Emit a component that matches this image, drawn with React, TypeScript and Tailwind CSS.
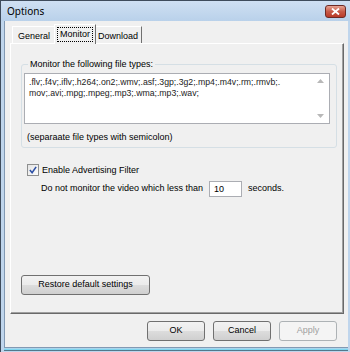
import React from 'react'

const btn =
  'h-[20px] rounded-[3px] border border-[#707070] bg-[linear-gradient(#f2f2f2_0%,#ebebeb_49%,#dddddd_50%,#cfcfcf_100%)] flex items-center justify-center text-black'

function TitleBar() {
  return (
    <div className="h-[20px] flex items-center justify-between pl-[6px] pr-[4px] bg-[linear-gradient(#cfe0f3,#b9d1ea)]">
      <span className="text-[10px] text-black font-['Noto_Sans','Liberation_Sans',sans-serif] leading-none">Options</span>
      <div className="w-[21px] h-[13px] mt-[1px] rounded-[3px] border border-[#6d2a25] bg-[linear-gradient(#e8a494,#c75a48_50%,#b93a28)] flex items-center justify-center">
        <svg width="9" height="7" viewBox="0 0 9 7">
          <path d="M1 0.5 L8 6.5 M8 0.5 L1 6.5" stroke="#fff" strokeWidth="1.8" />
        </svg>
      </div>
    </div>
  )
}

function Tab({ label, selected, pad }: { label: string; selected?: boolean; pad?: string }) {
  if (selected) {
    return (
      <div className="relative z-10 -mx-[2px] mb-[-1px] h-[20px] px-[2px] pt-[2px] bg-[#f0f0f0] border-t border-l border-white border-r border-r-[#707070] flex items-start">
        <span className="border border-dotted border-black px-[2px] leading-[13px]">{label}</span>
      </div>
    )
  }
  return (
    <div className={`h-[17px] ${pad} pt-[3px] bg-[#f0f0f0] border-t border-l border-white border-r border-r-[#707070] leading-[12px]`}>
      {label}
    </div>
  )
}

export default function App() {
  return (
    <div className="relative w-[350px] h-[352px] overflow-hidden bg-[#bfd5ec] border-t border-l border-[#3f4c5c] font-['Liberation_Sans',sans-serif] text-[9px] text-black">
      <TitleBar />
      <div className="ml-[3px] mr-[2px] h-[326px] bg-[#f0f0f0] border-l border-[#8299b3] flex flex-col">
        {/* tabs */}
        <div className="flex items-end h-[22px] pl-[7px] pt-[2px]">
          <Tab label="General" pad="px-[5px]" />
          <Tab label="Monitor" selected />
          <Tab label="Download" pad="px-[3px]" />
        </div>

        {/* panel */}
        <div className="ml-[5px] mr-[4px] h-[271px] border-t border-l border-white border-r border-b border-r-[#696969] border-b-[#696969] shadow-[inset_-1px_-1px_0_#a0a0a0] flex flex-col pl-[10px] pr-[6px]">
          <fieldset className="mt-[14px] border border-[#d5dfe5] rounded-[3px] pl-[2px] pr-[6px] pt-[3px] pb-[4px]">
            <legend className="ml-[4px] px-[2px] leading-[12px]">Monitor the following file types:</legend>
            <div className="h-[51px] bg-white border border-[#abadb3] flex">
              <div className="flex-1 pl-[4px] pr-[2px] pt-[3px] leading-[11px] text-[8.7px] text-[#222]">
                <div>.flv;.f4v;.iflv;.h264;.on2;.wmv;.asf;.3gp;.3g2;.mp4;.m4v;.rm;.rmvb;.</div>
                <div>mov;.avi;.mpg;.mpeg;.mp3;.wma;.mp3;.wav;</div>
              </div>
              <div className="w-[17px] flex flex-col justify-between items-center py-[5px]">
                <svg width="7" height="4" viewBox="0 0 7 4"><path d="M0 4 L3.5 0 L7 4 Z" fill="#b8b8b8" /></svg>
                <svg width="7" height="4" viewBox="0 0 7 4"><path d="M0 0 L3.5 4 L7 0 Z" fill="#b8b8b8" /></svg>
              </div>
            </div>
            <div className="mt-[7px] ml-[3px] leading-[12px]">(separaate file types with semicolon)</div>
          </fieldset>

          <div className="mt-[16px] ml-[6px] flex items-center h-[12px]">
            <div className="w-[12px] h-[12px] border border-[#8e8f8f] bg-[linear-gradient(135deg,#e4e4e4,#fdfdfd)] flex items-center justify-center">
              <svg width="8" height="8" viewBox="0 0 9 9">
                <path d="M1 4.5 L3.5 7.5 L8 1" stroke="#2c4fa5" strokeWidth="1.8" fill="none" />
              </svg>
            </div>
            <span className="ml-[3px] leading-[12px]">Enable Advertising Filter</span>
          </div>

          <div className="mt-[5px] ml-[20px] flex items-center h-[16px]">
            <span>Do not monitor the video which less than</span>
            <div className="ml-[6px] w-[33px] h-[16px] bg-white border border-[#abadb3] pl-[4px] leading-[14px]">10</div>
            <span className="ml-[6px]">seconds.</span>
          </div>

          <div className="mt-auto mb-[18px]">
            <div className={`${btn} w-[129px]`}>Restore default settings</div>
          </div>
        </div>

        {/* bottom buttons */}
        <div className="mt-[7px] flex justify-end gap-[8px] pr-[11px]">
          <div className={`${btn} w-[58px]`}>OK</div>
          <div className={`${btn} w-[58px]`}>Cancel</div>
          <div className="h-[20px] w-[58px] rounded-[3px] border border-[#adb2b5] bg-[#f4f4f4] flex items-center justify-center text-[#a0a0a0]">Apply</div>
        </div>
      </div>
      <div className="h-[4px] ml-[3px] mr-[2px] border-t border-[#8299b3] bg-[linear-gradient(#bfd5ec,#7fd6ef_50%,#3b4a5a)]" />
    </div>
  )
}
